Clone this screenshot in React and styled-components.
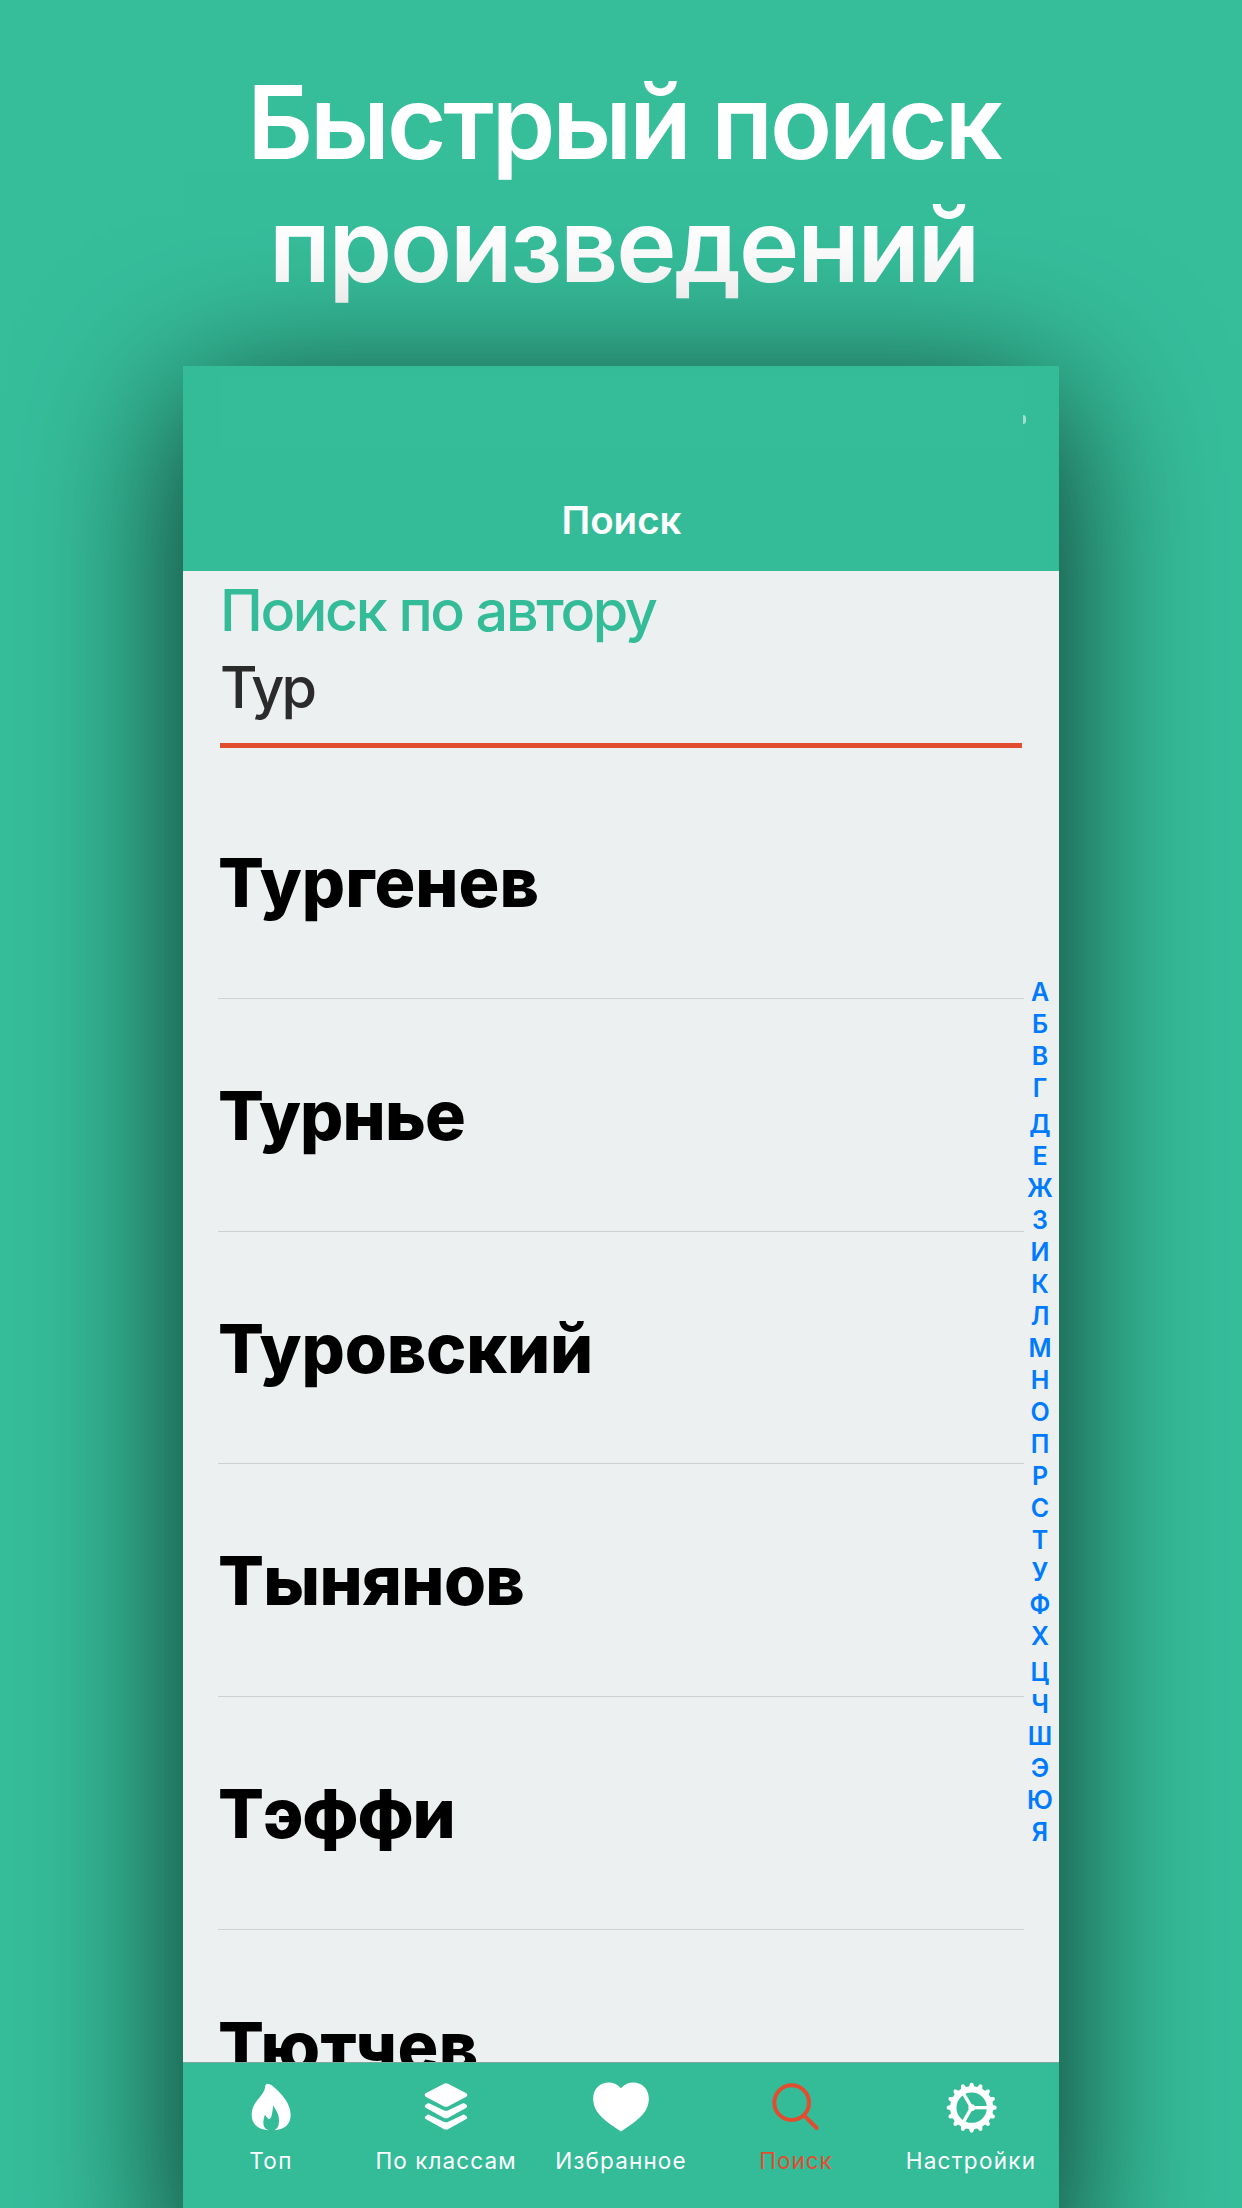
import React from 'react';
import styled, { createGlobalStyle } from 'styled-components';

const GREEN = '#34bc99';
const RED = '#e24c2f';
const PAPER = '#ecf0f1';

const GlobalStyle = createGlobalStyle`
  * { box-sizing: border-box; }
  body { margin: 0; background: #36be9b; }
`;

const Stage = styled.main`
  width: 1242px;
  height: 2208px;
  overflow: hidden;
  display: flex;
  flex-direction: column;
  align-items: center;
  background: #36be9b;
  font-family: Inter, 'Noto Sans', sans-serif;
`;

const Headline = styled.h1`
  flex: none;
  height: 366px;
  margin: 0;
  padding: 61px 0 0 5px;
  display: flex;
  flex-direction: column;
  align-items: center;
  color: #fff;
  font-size: 102px;
  font-weight: 600;
  line-height: 123px;
`;

const HeadlineRow = styled.span`
  white-space: nowrap;
  letter-spacing: ${(p) => p.$tracking}px;
`;

const Phone = styled.section`
  position: relative;
  flex: none;
  width: 876px;
  height: 1897px;
  display: flex;
  flex-direction: column;
  background: ${PAPER};
  box-shadow: 0 32px 150px rgba(0, 0, 0, 0.77);
`;

const NavBar = styled.header`
  flex: none;
  height: 205px;
  padding: 9px 33px 0 39px;
  background: ${GREEN};
`;

const StatusStrip = styled.div`
  display: flex;
  align-items: center;
  height: 73px;
`;

const StatusFill = styled.div`
  flex: 1;
  height: 100%;
  background: #35bd9a;
`;

const BatteryTip = styled.div`
  width: 3px;
  height: 9px;
  margin-top: 16px;
  border-radius: 0 3px 3px 0;
  background: #a3dfcf;
`;

const NavTitle = styled.h2`
  margin: 21px 0 0;
  padding-right: 5px;
  color: #fff;
  font-size: 38.5px;
  font-weight: 600;
  line-height: 103px;
  text-align: center;
`;

const SearchForm = styled.div`
  flex: none;
  height: 177px;
  margin: 0 37px;
  padding-top: 6px;
  display: flex;
  flex-direction: column;
  justify-content: space-between;
  border-bottom: 5px solid ${RED};
`;

const SearchLabel = styled.label`
  color: ${GREEN};
  font-size: 57.5px;
  font-weight: 500;
  line-height: 66px;
  letter-spacing: -2.37px;
`;

const SearchInput = styled.input`
  width: 100%;
  height: 66px;
  margin: 0 0 23px;
  padding: 0;
  border: 0;
  outline: 0;
  background: transparent;
  color: #2b2b2b;
  font: 500 57.5px/66px Inter, 'Noto Sans', sans-serif;
  letter-spacing: -2.7px;
`;

const Results = styled.div`
  flex: none;
  height: 1296px;
  margin-top: 18px;
  padding-left: 35px;
  display: flex;
  overflow: hidden;
`;

const AuthorList = styled.ul`
  flex: 1;
  margin: 0;
  padding: 0;
  list-style: none;
`;

const Author = styled.li`
  height: 232.8px;
  border-bottom: 1px solid #cdd1d3;
  color: #000;
  font-size: 68px;
  font-weight: 800;
  line-height: 233px;
  letter-spacing: ${(p) => p.$tracking}px;
  white-space: nowrap;
`;

const LetterIndex = styled.nav`
  width: 35px;
  padding: 210.4px 3px 0 0;
  display: flex;
  flex-direction: column;
  align-items: center;
`;

const Letter = styled.span`
  flex: none;
  height: 32.02px;
  margin-top: ${(p) => (p.$tall ? 3.6 : 0)}px;
  color: #007aff;
  font-size: 25px;
  font-weight: 600;
  line-height: 32px;
`;

const TabBar = styled.footer`
  flex: none;
  height: 201px;
  padding-right: 1px;
  display: flex;
  border-top: 1px solid #7aa89c;
  background: ${GREEN};
`;

const Tab = styled.div`
  flex: 1 1 0;
  display: flex;
  flex-direction: column;
  align-items: center;
  color: ${(p) => (p.$active ? RED : '#fff')};
`;

const TabIcon = styled.svg`
  width: 60px;
  height: 60px;
  margin-top: 14px;
  fill: currentColor;
`;

const TabLabel = styled.span`
  margin-top: 8px;
  font-size: 22.5px;
  font-weight: 400;
  line-height: 32px;
  letter-spacing: ${(p) => p.$tracking}px;
  margin-right: -1px;
  white-space: nowrap;
`;

const FlameIcon = () => (
  <TabIcon viewBox="-32 -20 180 180">
    <path d="M48 0Q54 0 60 5C92 30 117 62 117 94C117 124 96 138 68 139.5C78 136 82 126 82 110C82 90 72 79 64.500 65C62 84 61 105 53 106C47 106 44 97 40 93C37 101 35 108 35 118C35 129 42 138 52 139.500C20 138 0 122 0 93C0 66 17 50 30 33C38 22 40 14 41 6Q42 0 48 0Z" />
  </TabIcon>
);

const chevron = (y) =>
  `M13 ${y}Q9 ${y - 1} 5 ${y + 3}Q-3 ${y + 8} 3 ${y + 13}L57 ${y + 43}Q64 ${y + 46} 71 ${y + 43}L125 ${y + 13}Q131 ${y + 8} 123 ${y + 3}Q119 ${y - 1} 115 ${y}L71 ${y + 21}Q64 ${y + 24} 57 ${y + 21}Z`;

const LayersIcon = () => (
  <TabIcon viewBox="-26 -19 180 180">
    <path d="M58 1.500Q64 -1.500 70 1.500L125 30Q131 35 125 40L71 68.500Q64 72 57 68.500L3 40Q-3 35 3 30Z" />
    <path d={chevron(60)} />
    <path d={chevron(94)} />
  </TabIcon>
);

const HeartIcon = () => (
  <TabIcon viewBox="-6.500 -16.500 180 180">
    <path d="M83.500 17C95 5 108 0 120 0C147 0 167 20 167 48C167 95 125 118 83.500 147C42 118 0 95 0 48C0 20 20 0 47 0C59 0 72 5 83.500 17Z" />
  </TabIcon>
);

const SearchIcon = () => (
  <TabIcon viewBox="0 0 180 180">
    <g fill="none" stroke="currentColor" strokeWidth="12" strokeLinecap="round">
      <circle cx="77" cy="77" r="52" />
      <path d="M114 115L152 153" />
    </g>
  </TabIcon>
);

const SPOKES = [0, 120, 240];
const TEETH = Array.from({ length: 16 }, (_, i) => i * 22.5);

const GearIcon = () => (
  <TabIcon viewBox="-92 -92 180 180">
    <g fill="none" stroke="currentColor">
      <circle r="55" strokeWidth="19" />
      <g strokeWidth="10">
        {SPOKES.map((a) => (
          <path key={a} d="M0 0H50" transform={`rotate(${a})`} />
        ))}
      </g>
    </g>
    <circle r="10" />
    {TEETH.map((a) => (
      <path
        key={a}
        d="M60 -11L66 -7L71 -5.500Q75 -4.500 75 0Q75 4.500 71 5.500L66 7L60 11Z"
        transform={`rotate(${a})`}
      />
    ))}
  </TabIcon>
);

const AUTHORS = [
  { name: 'Тургенев', tracking: 0 },
  { name: 'Турнье', tracking: -0.87 },
  { name: 'Туровский', tracking: -0.16 },
  { name: 'Тынянов', tracking: -0.65 },
  { name: 'Тэффи', tracking: -1.1 },
  { name: 'Тютчев', tracking: 0.4 },
];

const LETTERS = [...'АБВГДЕЖЗИКЛМНОПРСТУФХЦЧШЭЮЯ'];
const DESCENDING = 'ДЦ';

const TABS = [
  { label: 'Топ', tracking: 1.37, Icon: FlameIcon },
  { label: 'По классам', tracking: 1.1, Icon: LayersIcon },
  { label: 'Избранное', tracking: 1.15, Icon: HeartIcon },
  { label: 'Поиск', tracking: 1, Icon: SearchIcon, active: true },
  { label: 'Настройки', tracking: 1.27, Icon: GearIcon },
];

export default function App() {
  return (
    <Stage>
      <GlobalStyle />
      <Headline>
        <HeadlineRow $tracking={-3.05}>Быстрый поиск</HeadlineRow>
        <HeadlineRow $tracking={-2.2}>произведений</HeadlineRow>
      </Headline>
      <Phone>
        <NavBar>
          <StatusStrip>
            <StatusFill />
            <BatteryTip />
          </StatusStrip>
          <NavTitle>Поиск</NavTitle>
        </NavBar>
        <SearchForm>
          <SearchLabel htmlFor="author">Поиск по автору</SearchLabel>
          <SearchInput id="author" defaultValue="Тур" />
        </SearchForm>
        <Results>
          <AuthorList>
            {AUTHORS.map((a) => (
              <Author key={a.name} $tracking={a.tracking}>{a.name}</Author>
            ))}
          </AuthorList>
          <LetterIndex>
            {LETTERS.map((l) => (
              <Letter key={l} $tall={DESCENDING.includes(l)}>{l}</Letter>
            ))}
          </LetterIndex>
        </Results>
        <TabBar>
          {TABS.map(({ label, tracking, Icon, active }) => (
            <Tab key={label} $active={active}>
              <Icon />
              <TabLabel $tracking={tracking}>{label}</TabLabel>
            </Tab>
          ))}
        </TabBar>
      </Phone>
    </Stage>
  );
}
